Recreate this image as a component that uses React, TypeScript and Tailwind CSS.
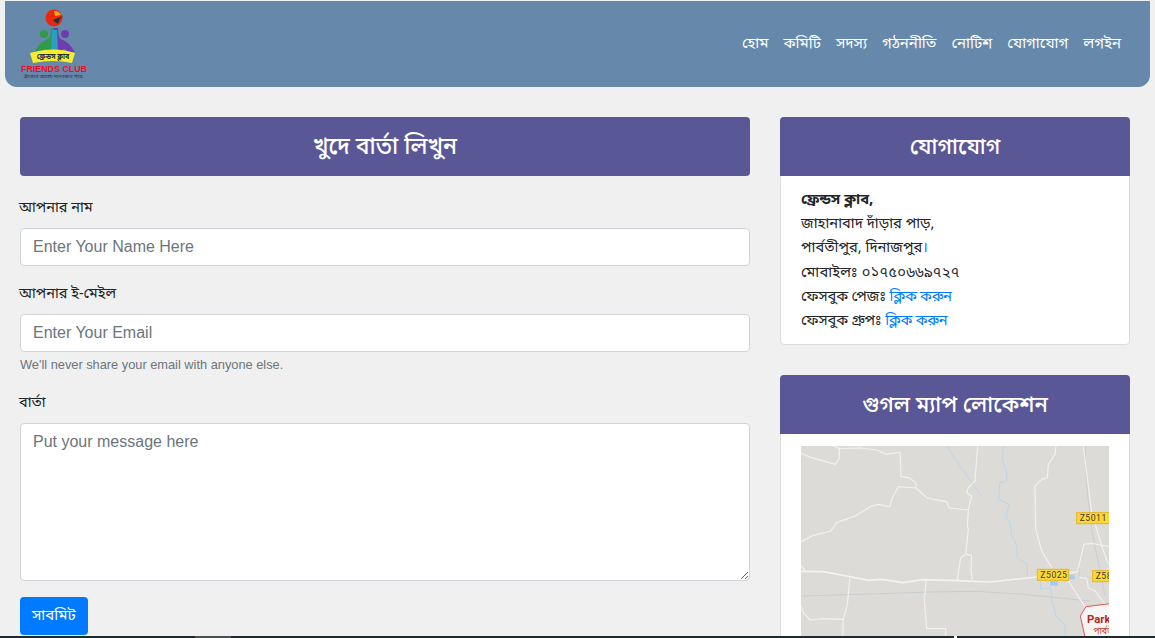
const bangla = "font-['Noto_Sans_Bengali','Lohit_Bengali','Noto_Sans','Liberation_Sans',sans-serif]";

const navItems = ['হোম', 'কমিটি', 'সদস্য', 'গঠননীতি', 'নোটিশ', 'যোগাযোগ', 'লগইন'];

function Logo() {
  return (
    <svg width="80" height="80" viewBox="0 0 80 80" className="block">
      <circle cx="39" cy="13" r="8.5" fill="#e8280c" />
      <path d="M39 6 A7 7 0 0 1 46 10 L40 11 Z" fill="#f5a623" />
      <path d="M38 15 L48 11 L45 14 L43 19 L40 17 Z" fill="#26303a" />
      <circle cx="29" cy="29" r="4" fill="#2f9a49" />
      <circle cx="50" cy="29" r="4" fill="#6f3bb0" />
      <path d="M19 47 Q25 37 33 34 Q36 32 36 23 L40 23 L40 47 L33 47 Q31 41 26 47 Z" fill="#2f9a49" />
      <path d="M60 47 Q54 37 46 34 Q43 32 43 23 L39 23 L39 47 L46 47 Q48 41 53 47 Z" fill="#6f3bb0" />
      <path d="M37 25 L42 25 L43 47 L36 47 Z" fill="#2a9fc4" />
      <path d="M15 48 Q39 41 60 48 L57 58 Q39 54 18 58 Z" fill="#f6ee2a" />
      <text x="38" y="54" textAnchor="middle" fontSize="7" fontWeight="700" fill="#27303a">ফ্রেন্ডস ক্লাব</text>
      <text x="39" y="67" textAnchor="middle" textLength="66" lengthAdjust="spacingAndGlyphs" fontFamily="Liberation Sans, sans-serif" fontWeight="700" fontSize="9" fill="#e8101e">FRIENDS CLUB</text>
      <text x="38" y="73" textAnchor="middle" textLength="59" lengthAdjust="spacingAndGlyphs" fontSize="5" fill="#27303a">ঐক্যের আলো মানবতার পথে</text>
    </svg>
  );
}

function Shield({ x, y, w, label }: { x: number; y: number; w: number; label: string }) {
  return (
    <g>
      <rect x={x} y={y} width={w} height="33" fill="#fdd835" stroke="#e6b422" strokeWidth="3" />
      <text x={x + 9} y={y + 26} fontFamily="Roboto, sans-serif" fontSize="26" letterSpacing="1.5" fill="#3a3a36">{label}</text>
    </g>
  );
}

// coordinates follow a 3x grid, so the viewBox is three times the drawn size
function MapView() {
  return (
    <svg viewBox="33 30 924 570" width="308" height="190" className="block">
      <rect x="33" y="30" width="924" height="570" fill="#dcdbd8" />
      <g fill="none" stroke="#c9ced1" strokeWidth="3">
        <path d="M33 480 L200 475 L420 468 L560 466 L700 475 L900 495" />
        <path d="M885 30 L890 150 L905 280 L945 480" />
      </g>
      <g fill="none" stroke="#f1f1ef" strokeWidth="3.5" strokeLinejoin="round">
        <path d="M33 52 L65 65 L137 85 L148 65 L148 38 L210 36 L260 42 L288 55 L330 48 L333 122 L358 125 L377 140 L378 155" />
        <path d="M148 38 L130 30 M210 36 L210 30" />
        <path d="M33 318 L70 298 L122 285 L140 260 L195 240 L245 210 L265 205 L300 212 L305 190 L325 152 L378 156 L410 185 L430 190 L470 197 L478 216 L535 222" />
        <path d="M563 30 L555 135 L535 155 L530 170 L545 180 L535 222 L532 270 L535 280 L527 355 L545 358 L543 400 L547 432" />
        <path d="M527 355 L512 365 L502 432" />
        <path d="M798 30 L795 55 L775 85 L772 125 L755 130 L735 150 L737 280 L755 345 L785 395" />
        <path d="M880 30 L905 230 L935 330 L955 385" />
        <path d="M862 408 L882 325 L905 322 L957 332" />
        <path d="M835 435 L890 520 M870 425 L890 428 L895 455 L915 465 L957 520" />
        <path d="M180 425 L172 505 L160 550 L158 600 M33 510 L40 530 L60 552 L100 548 L160 550" />
        <path d="M408 433 L405 475 L402 480 L410 578 L467 578 L467 600" />
        <path d="M33 388 L45 403" />
      </g>
      <path d="M33 406 L100 407 L170 420 L235 433 L275 430 L340 440 L400 431 L500 434 L600 438 L740 423 L860 408" fill="none" stroke="#f3f3f1" strokeWidth="5" />
      <g fill="none" stroke="#b0d2ec" strokeWidth="2">
        <path d="M470 30 L572 178" />
        <path d="M640 30 L638 70 L650 110 L650 135 L630 140 L625 190 L658 205 L648 240 L660 260 L665 300 L680 325 L682 365 L712 385 L712 420" />
        <path d="M752 435 L752 458 L782 456 L785 490 L800 545 L825 565 L825 600" />
        <path d="M868 395 L868 420" />
      </g>
      <rect x="780" y="435" width="24" height="14" fill="#a4cdf0" />
      <rect x="838" y="416" width="16" height="14" fill="#a4cdf0" />
      <path d="M960 503 L888 512 L871 540 L885 603 L960 603 Z" fill="#f7f6f4" stroke="#e05555" strokeWidth="3" />
      <text x="891" y="560" fontFamily="Roboto, sans-serif" fontWeight="700" fontSize="34" fill="#b3261e">Park</text>
      <text x="910" y="594" fontSize="26" fill="#c0392b">পার্বতীপুর</text>
      <Shield x={860} y={230} w={110} label="Z5011" />
      <Shield x={742} y={400} w={94} label="Z5025" />
      <Shield x={908} y={404} w={80} label="Z5863" />
    </svg>
  );
}

export default function App() {
  return (
    <div className={`h-[638px] w-[1155px] overflow-hidden flex flex-col bg-[#f0f0f0] text-base text-[#212529] ${bangla}`}>
      <div className="h-[636px] shrink-0 overflow-hidden">
        <div className="mx-[5px] mt-px h-[86px] rounded-b-xl bg-[#6688aa] flex justify-between pl-[10px] pr-[29px]">
          <div className="pt-1"><Logo /></div>
          <nav className="flex gap-[15px] pt-[31px] text-[15px] text-white">
            {navItems.map((item) => (
              <a key={item} className="leading-6">{item}</a>
            ))}
          </nav>
        </div>

        <div className="flex gap-[30px] px-5 pt-[30px]">
          <div className="w-[730px] shrink-0">
            <h2 className="h-[59px] pt-1 flex items-center justify-center rounded bg-[#5a5796] text-[23px] font-medium text-white">খুদে বার্তা লিখুন</h2>

            <label className="block -ml-px mt-[20px] pt-px mb-[7px] text-[14.5px] leading-6">আপনার নাম</label>
            <input placeholder="Enter Your Name Here" className="block w-full h-[38px] rounded border border-[#ced4da] bg-white px-3 font-['Liberation_Sans',sans-serif] placeholder:text-[#6c757d]" />

            <label className="block -ml-px mt-4 pt-px mb-[7px] text-[14.5px] leading-6">আপনার ই-মেইল</label>
            <input placeholder="Enter Your Email" className="block w-full h-[38px] rounded border border-[#ced4da] bg-white px-3 font-['Liberation_Sans',sans-serif] placeholder:text-[#6c757d]" />
            <p className="mt-[3px] text-[12.8px] leading-[19px] text-[#6c757d] font-['Liberation_Sans',sans-serif]">We'll never share your email with anyone else.</p>

            <label className="block -ml-px mt-[17px] pt-px mb-[7px] text-[14.5px] leading-6">বার্তা</label>
            <textarea placeholder="Put your message here" className="block w-full h-[158px] rounded border border-[#ced4da] bg-white px-3 py-1.5 font-['Liberation_Sans',sans-serif] placeholder:text-[#6c757d]" />

            <button className="mt-4 h-[38px] rounded bg-[#007bff] px-3 text-[15px] text-white">সাবমিট</button>
          </div>

          <div className="w-[350px] shrink-0">
            <div className="rounded border border-[#dcdcdc] bg-white">
              <h3 className="h-[59px] -mx-px -mt-px pt-1 flex items-center justify-center rounded-t bg-[#5a5796] text-[22px] font-medium text-white">যোগাযোগ</h3>
              <div className="px-5 pt-[13px] pb-2.5 text-[14.7px] leading-[24.2px]">
                <b>ফ্রেন্ডস ক্লাব,</b><br />
                জাহানাবাদ দাঁড়ার পাড়,<br />
                পার্বতীপুর, দিনাজপুর<span className="text-[#007bff]">।</span><br />
                <span className="tracking-[0.2px]">মোবাইলঃ ০১৭৫০৬৬৯৭২৭</span><br />
                <span className="tracking-[-0.1px]">ফেসবুক পেজঃ </span><a className="tracking-[-0.25px] text-[#007bff]">ক্লিক করুন</a><br />
                <span className="tracking-[-0.1px]">ফেসবুক গ্রুপঃ </span><a className="tracking-[-0.25px] text-[#007bff]">ক্লিক করুন</a>
              </div>
            </div>

            <div className="mt-[30px] rounded border border-[#dcdcdc] bg-white">
              <h3 className="h-[59px] -mx-px -mt-px pt-1 flex items-center justify-center rounded-t bg-[#5a5796] text-[22px] font-medium text-white">গুগল ম্যাপ লোকেশন</h3>
              <div className="px-5 py-3">
                <MapView />
              </div>
            </div>
          </div>
        </div>
      </div>

      <div className="h-0.5 shrink-0 flex bg-[#1f2a2c]">
        <div className="w-[195px]" />
        <div className="w-9 bg-[#4a5050]" />
        <div className="w-[723px]" />
        <div className="w-[3px] bg-white" />
      </div>
    </div>
  );
}
